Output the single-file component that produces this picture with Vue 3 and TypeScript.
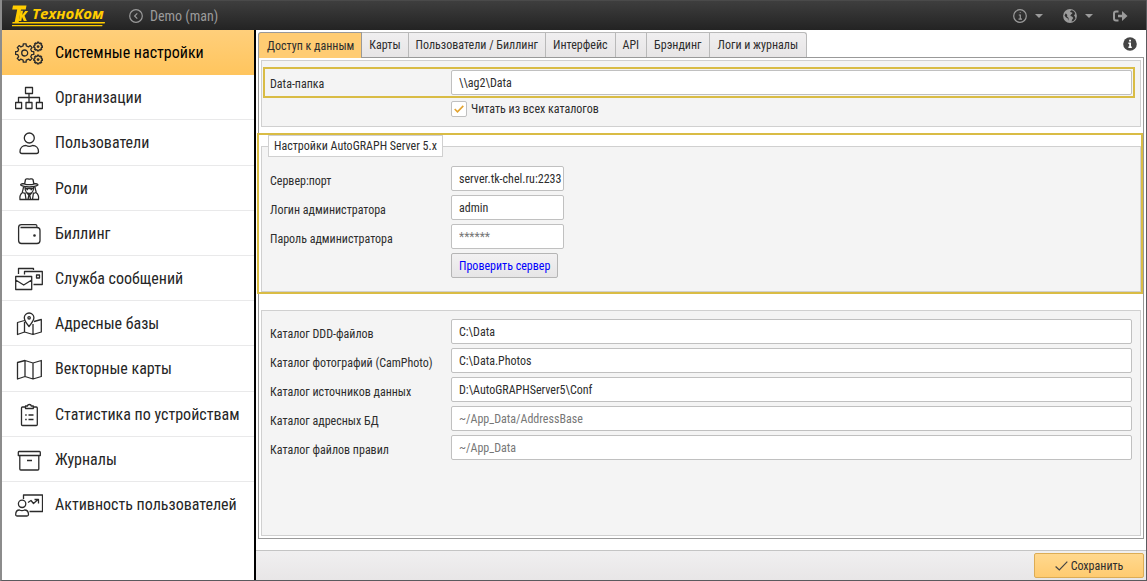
<script setup lang="ts">
import { ref } from 'vue'

interface MenuItem {
  label: string
  icon: string
}

interface Field {
  id: string
  label: string
  value: string
  placeholder?: string
  type?: string
}

function gear(cx: number, cy: number, outer: number, inner: number, teeth: number): string {
  const step = (Math.PI * 2) / teeth
  const points: string[] = []
  for (let i = 0; i < teeth; i++) {
    const a = i * step
    const corners: [number, number][] = [
      [inner, a - step * 0.28],
      [outer, a - step * 0.2],
      [outer, a + step * 0.2],
      [inner, a + step * 0.28],
    ]
    for (const [r, t] of corners) {
      points.push(`${(cx + r * Math.cos(t)).toFixed(2)} ${(cy + r * Math.sin(t)).toFixed(2)}`)
    }
  }
  return `M${points.join('L')}Z`
}

const gears = [
  gear(9.7, 12, 9.2, 7.2, 8),
  'M12.7 12a3 3 0 1 1-6 0a3 3 0 1 1 6 0Z',
  gear(23.1, 5.6, 4.4, 3.5, 8),
  'M23.9 5.6a.8.8 0 1 1-1.600 0a.8.8 0 1 1 1.600 0Z',
  gear(23.1, 18.6, 4.4, 3.5, 8),
  'M23.9 18.6a.8.8 0 1 1-1.600 0a.8.8 0 1 1 1.600 0Z',
].join('')

const menu: MenuItem[] = [
  { label: 'Системные настройки', icon: gears },
  {
    label: 'Организации',
    icon: 'M10.5 1.5h7v6h-7ZM14 7.5v9M3.5 16.5v-5h21v5M.6 16.5h6v6h-6ZM11 16.5h6v6h-6ZM21.4 16.5h6v6h-6Z',
  },
  {
    label: 'Пользователи',
    icon: 'M19.3 7a5 5 0 1 1-10 0a5 5 0 1 1 10 0ZM5 20.5c0-3.5 2.5-6 6-6c2 1 4.500 1 6.500 0c3.500 0 6 2.500 6 6c0 1.400-.6 2-2 2h-14.500c-1.400 0-2-.6-2-2Z',
  },
  {
    label: 'Роли',
    icon: 'M9.5 7.500L10.500 2.500C11.500 1 13 2.200 14.300 2.200C15.600 2.200 17 1 18 2.500L19 7.500M9.500 6.500C6.500 6.800 5 7.300 6 8.300C9 10.300 19.600 10.300 22.600 8.300C23.600 7.300 22 6.800 19 6.500M9 6.800C12.500 8 16 8 19.600 6.800M8.500 10C8 14 7 14.500 7.500 15.500L10 16.500M20 10C20.500 14 21.500 14.500 21 15.500L18.500 16.500M10 10.200C10 14 12 16.500 14.300 16.500C16.600 16.500 18.600 14 18.600 10.200M10.500 11.500h7.600M11.500 12.500h1.500M15.500 12.500h1.500M7.500 15.500C5 17.500 4.500 20 5 22.500H11L10 15.500M21 15.500C23.500 17.500 24 20 23.500 22.500H17.500L18.500 15.500M11 22.500H17.500M11.500 15.500L14.300 18.500L17 15.500M13 22.500L13.800 18.500M15.600 22.500L14.800 18.500',
  },
  {
    label: 'Биллинг',
    icon: 'M5.500 5.500H22C24 5.500 25 6.500 25 8.500V18.500C25 20.500 24 21.500 22 21.500H6.500C4.500 21.500 3.600 20.500 3.600 18.500V5.500C3.600 3.500 4.500 2.700 6.500 2.700H20.500C22 2.700 22 3.500 22 5.500M18.800 13.500a.7.7 0 1 1 1.400 0a.7.7 0 1 1-1.400 0Z',
  },
  {
    label: 'Служба сообщений',
    icon: 'M.7 9.500h16v13h-16ZM.7 13L8.700 18L16.700 13M3.500 7V1.500H18.500V3M9.500 7.500V4.500H27.300V17.500H18.500M21.500 8h3v3h-3Z',
  },
  {
    label: 'Адресные базы',
    icon: 'M9.500 8.500L2.500 10.500V22.500L9.500 20L18 22.500L26.300 20V7.500L19 9.500M9.500 10V20M18 12V22.500M14 14.500C11.500 11.500 9.300 8.500 9.300 5.800A4.800 4.800 0 0 1 18.900 5.800C18.900 8.500 16.500 11.500 14 14.500ZM15.300 5.800a1.200 1.200 0 1 1-2.400 0a1.200 1.200 0 1 1 2.400 0Z',
  },
  {
    label: 'Векторные карты',
    icon: 'M2.500 5.500L10 3.500L18 6L26.300 3.500V19.500L18 22L10 19.500L2.500 22ZM10 3.500V19.500M18 6V22',
  },
  {
    label: 'Статистика по устройствам',
    icon: 'M10 4H7.500Q6.500 4 6.500 5V21.500Q6.500 22.500 7.500 22.500H21.300Q22.300 22.500 22.300 21.500V5Q22.300 4 21.300 4H18.700M10.500 3H12.500C12.500 1 16.200 1 16.200 3H18.300V5.500H10.500ZM10.200 12h1.500M13.500 12h5M10.200 16.500h1.500M13.500 16.500h5',
  },
  {
    label: 'Журналы',
    icon: 'M4 3.500H24.500Q25.300 3.500 25.300 4.500V7.500H3.300V4.500Q3.300 3.500 4 3.500ZM4.800 7.500V21Q4.800 22 5.800 22H22.800Q23.800 22 23.800 21V7.500M12 12.500h5',
  },
  {
    label: 'Активность пользователей',
    icon: 'M8.500 6V2H27.500V18.500H14.500M10.800 10.800a3.700 3.700 0 1 1-7.400 0a3.700 3.700 0 1 1 7.400 0ZM.7 21.500C.7 18 2.500 17 4.500 17C6 17.800 8 17.800 9.500 17C11.500 17 13.500 18 13.500 21.500C13.500 22.500 13 23 12 23H2.200C1.200 23 .7 22.500 .7 21.500ZM13 9.500L16 7.500L18.500 10.500L23 6.500M19.500 6.500H23.500V10.500',
  },
]

const tabs = ['Доступ к данным', 'Карты', 'Пользователи / Биллинг', 'Интерфейс', 'API', 'Брэндинг', 'Логи и журналы']
const activeItem = ref(0)
const activeTab = ref(0)

const dataFolder = ref('\\\\ag2\\Data')
const readAll = ref(true)

const serverFields = ref<Field[]>([
  { id: 'server', label: 'Сервер:порт', value: 'server.tk-chel.ru:2233' },
  { id: 'login', label: 'Логин администратора', value: 'admin' },
  { id: 'password', label: 'Пароль администратора', value: '', placeholder: '******', type: 'password' },
])

const catalogFields = ref<Field[]>([
  { id: 'ddd', label: 'Каталог DDD-файлов', value: 'C:\\Data' },
  { id: 'photos', label: 'Каталог фотографий (CamPhoto)', value: 'C:\\Data.Photos' },
  { id: 'sources', label: 'Каталог источников данных', value: 'D:\\AutoGRAPHServer5\\Conf' },
  { id: 'address', label: 'Каталог адресных БД', value: '', placeholder: '~/App_Data/AddressBase' },
  { id: 'rules', label: 'Каталог файлов правил', value: '', placeholder: '~/App_Data' },
])
</script>

<template>
  <div class="app">
    <header class="topbar">
      <div class="logo">
        <svg width="96" height="22" viewBox="0 0 96 22" aria-hidden="true">
          <path d="M1 .5H14.500L13.700 4.500H9L6.500 18H2.500L5.200 4.500H.2Z" />
          <path d="M8.500 5.800H11L10.300 10L13.200 6H16.300L12.500 10.800L14.800 16H11.800L10 12L9.300 16H6.800Z" />
          <path d="M.5 17H93L92.700 18.500H.3ZM0 20H90.500L90.200 21.200H0Z" />
        </svg>
        <span>ТехноКом</span>
      </div>
      <button class="back" type="button">
        <svg width="14" height="14" viewBox="0 0 14 14"><circle cx="7" cy="7" r="6.300" /><path d="M8.300 4.300L5.600 7L8.300 9.700" /></svg>
        <span>Demo (man)</span>
      </button>
      <div class="tools">
        <button type="button" aria-label="Информация">
          <svg width="14" height="14" viewBox="0 0 14 14"><circle cx="7" cy="7" r="6.300" /><path d="M5.800 6H7.300V10M5.500 10.200H9M6.800 3.500H7.600" /></svg>
          <i class="caret"></i>
        </button>
        <button type="button" aria-label="Язык">
          <svg width="14" height="14" viewBox="0 0 14 14"><circle cx="7" cy="7" r="6.900" class="solid" /><path class="land" d="M8.500 1.200L7 2.200L7.800 3.300L9.300 3.400L9.300 4.500L8 5.500L7.300 7L9 7.500L10.300 9L9.200 10.500L8.500 12.600L10.500 12L12.500 9.500L12 7.800L11 6.300L12.300 5L11.500 3L10 1.700ZM2.800 4.200L1.500 6.500L3 8.500L4.600 9.300L5.300 11.800L5.600 9L4 7.500L4.300 6Z" /></svg>
          <i class="caret"></i>
        </button>
        <button type="button" aria-label="Выход">
          <svg width="15" height="12" viewBox="0 0 15 12"><path class="thick" d="M5.500 1.500H3Q1 1.500 1 3.500V8.500Q1 10.500 3 10.500H5.500" /><path class="solid" d="M5 4.700H9V1L14.500 6L9 11V7.300H5Z" /></svg>
        </button>
      </div>
    </header>

    <div class="body">
      <nav class="sidebar">
        <a
          v-for="(item, i) in menu"
          :key="item.label"
          href="#"
          class="item"
          :class="{ active: i === activeItem }"
          @click.prevent="activeItem = i"
        >
          <svg width="28" height="24" viewBox="0 0 28 24"><path :d="item.icon" /></svg>
          <span>{{ item.label }}</span>
        </a>
      </nav>

      <main class="content">
        <div class="tabbar">
          <div class="tabs" role="tablist">
            <button
              v-for="(tab, i) in tabs"
              :key="tab"
              type="button"
              role="tab"
              :aria-selected="i === activeTab"
              :class="{ selected: i === activeTab }"
              @click="activeTab = i"
            >{{ tab }}</button>
          </div>
          <button class="help" type="button" aria-label="Справка">
            <svg width="14" height="14" viewBox="0 0 14 14"><circle cx="7" cy="7" r="6.800" /><path d="M5.400 5.600H8V9.500H8.800V10.900H5.400V9.500H6.200V7H5.400ZM6.100 2.700H8V4.500H6.100Z" /></svg>
          </button>
        </div>

        <section class="panel">
          <div class="group first">
            <div class="row marked">
              <label for="data-folder">Data-папка</label>
              <input id="data-folder" v-model="dataFolder" type="text" />
            </div>
            <label class="check">
              <input v-model="readAll" type="checkbox" />
              <svg width="10" height="8" viewBox="0 0 10 8"><path d="M.7 4L3.500 6.800L9.300 .9" /></svg>
              <span>Читать из всех каталогов</span>
            </label>
          </div>

          <div class="frame">
            <fieldset class="group server">
              <legend>Настройки AutoGRAPH Server 5.x</legend>
              <div v-for="f in serverFields" :key="f.id" class="row">
                <label :for="f.id">{{ f.label }}</label>
                <input :id="f.id" v-model="f.value" :type="f.type ?? 'text'" :placeholder="f.placeholder" class="short" />
              </div>
              <button type="button" class="verify">Проверить сервер</button>
            </fieldset>
          </div>

          <div class="group catalogs">
            <div v-for="f in catalogFields" :key="f.id" class="row">
              <label :for="f.id">{{ f.label }}</label>
              <input :id="f.id" v-model="f.value" type="text" :placeholder="f.placeholder" />
            </div>
          </div>
        </section>

        <footer class="footer">
          <button type="button" class="save">
            <svg width="13" height="10" viewBox="0 0 13 10"><path d="M.6 5.500L4.300 9L12.300 .7" /></svg>
            <span>Сохранить</span>
          </button>
        </footer>
      </main>
    </div>
  </div>
</template>

<style>
body {
  margin: 0;
}
</style>

<style scoped>
.app,
.app * {
  box-sizing: border-box;
}
.app {
  display: flex;
  flex-direction: column;
  min-height: 100vh;
  border: solid #5a5a5e;
  border-width: 0 1px 1px 0;
  border-left: 2px solid #8c8c8c;
  background: #fff;
  color: #2d2d2d;
  font: 12px/16px 'Roboto Condensed', 'Liberation Sans', sans-serif;
}
button,
input {
  margin: 0;
  font: inherit;
  color: inherit;
}
svg {
  display: block;
  flex: none;
}

.topbar {
  display: flex;
  align-items: center;
  height: 30px;
  padding: 0 18px 0 10px;
  border-top: 1px solid #4a4a4a;
  background: linear-gradient(#3e3e3e, #232323);
  color: #9b9b9b;
}
.topbar button {
  display: flex;
  align-items: center;
  padding: 0;
  border: 0;
  background: none;
}
.topbar button svg {
  fill: none;
  stroke: #9b9b9b;
  stroke-width: 1.2;
}
.topbar button .solid {
  fill: #9b9b9b;
  stroke: none;
}
.topbar button .land {
  fill: #303030;
  stroke: none;
}
.topbar button .thick {
  stroke-width: 2;
}
.logo {
  display: grid;
  width: 97px;
  margin-right: 20px;
  color: #fc0;
  fill: #fc0;
  font: italic 700 15px/16px 'Open Sans', sans-serif;
}
.logo > * {
  grid-area: 1 / 1;
}
.logo span {
  padding-left: 20px;
}
.back {
  gap: 7px;
}
.topbar .back {
  font-size: 14px;
}
.tools {
  display: flex;
  gap: 20px;
  margin-left: auto;
}
.tools button {
  gap: 8px;
}
.caret {
  border: 4px solid transparent;
  border-top-color: #9b9b9b;
  border-bottom: 0;
}

.body {
  display: flex;
  flex: 1;
}
.sidebar {
  display: flex;
  flex: none;
  flex-direction: column;
  width: 254px;
  padding-bottom: 53px;
  border-right: 2px solid #000;
}
.item {
  display: flex;
  flex: 1;
  align-items: center;
  gap: 12px;
  min-height: 45px;
  padding: 2px 0 0 13px;
  border-bottom: 1px solid #e9e9ea;
  color: #262626;
  font-size: 16px;
  line-height: 20px;
  text-decoration: none;
  white-space: nowrap;
}
.item:last-child {
  border-bottom-color: transparent;
}
.item svg {
  fill: none;
  stroke: #2b2b2b;
  stroke-width: 1.3;
  stroke-linejoin: round;
}
.item.active {
  border-bottom-color: #ffc55e;
  background: linear-gradient(#ffcf7b, #ffc55e);
  color: #000;
}

.content {
  display: flex;
  flex: 1;
  flex-direction: column;
  min-width: 0;
}
.tabbar {
  position: relative;
  display: flex;
  justify-content: space-between;
  align-items: flex-end;
  padding: 2px 9px 0 2px;
}
.tabs {
  display: flex;
  height: 26px;
  margin-bottom: -1px;
}
.tabs button {
  height: 25px;
  padding: 0 7px;
  border: 1px solid #b9b9b9;
  border-width: 1px 1px 0 0;
  background: linear-gradient(#f0eff0, #e7e5e6);
  white-space: nowrap;
}
.tabs button:first-child {
  padding-left: 8px;
  border-left-width: 1px;
  border-top-left-radius: 3px;
}
.tabs button:last-child {
  padding: 0 8px;
  border-top-right-radius: 3px;
}
.tabs .selected {
  height: 26px;
  border-color: #999;
  background: #ffcc73;
}
.help {
  padding: 0;
  margin-bottom: 6px;
  border: 0;
  background: none;
}
.help circle {
  fill: #454545;
}
.help path {
  fill: #fff;
}
.panel {
  display: flex;
  flex: 1;
  flex-direction: column;
  margin: 0 2px 11px;
  padding: 2px 0;
  border: 1px solid #999;
}

.group {
  border: 1px solid #d0d0d0;
  background: #f4f4f4;
}
.row {
  display: grid;
  grid-template-columns: 181px 1fr;
  align-items: start;
}
.row label {
  padding-top: 2px;
  line-height: 27px;
}
.row input {
  width: 100%;
  height: 25px;
  padding: 0 7px;
  border: 1px solid #c0c0c0;
  border-radius: 2px;
  background: #fff;
  outline: 0;
}
.row .short {
  width: 113px;
  padding-right: 0;
}
input::placeholder {
  color: #777;
  opacity: 1;
}
.first {
  height: 67px;
  margin: 0 2px;
  padding: 6px 5px 0 1px;
}
.marked {
  padding: 1px 1px 1px 5px;
  border: 2px solid #d9bc45;
}
.marked label {
  padding-top: 3px;
  line-height: 22px;
}
.check {
  display: grid;
  grid-template-columns: 16px auto;
  justify-content: start;
  align-items: center;
  column-gap: 4px;
  margin: 3px 0 0 188px;
}
.check input {
  grid-area: 1 / 1;
  width: 16px;
  height: 16px;
  appearance: none;
  border: 1px solid #c0c0c0;
  border-radius: 2px;
  background: #fff;
}
.check svg {
  grid-area: 1 / 1;
  justify-self: center;
  fill: none;
  stroke: #e2a32f;
  stroke-width: 1.6;
  visibility: hidden;
}
.check input:checked + svg {
  visibility: visible;
}
.frame {
  margin: 6px 0 0 -2px;
  padding-left: 2px;
  border: 2px solid #d9bc45;
}
.server {
  min-width: 0;
  margin: 0;
  padding: 9px 8px 13px;
}
legend {
  margin-left: -2px;
  padding: 2px 5px;
  border: 1px solid #d0d0d0;
  background: #fff;
  line-height: 16px;
}
.verify {
  display: block;
  height: 25px;
  margin-left: 181px;
  padding: 0 7px;
  border: 1px solid #b5b5b5;
  border-radius: 2px;
  background: linear-gradient(#f2f1f2, #e6e5e6);
}
button.verify {
  color: #00f;
}
.catalogs {
  flex: 1;
  margin: 16px 2px 0;
  padding: 8px;
}

.footer {
  display: flex;
  justify-content: flex-end;
  height: 30px;
  padding: 2px;
  border-top: 1px solid #c4c4c4;
  background: linear-gradient(#f0eff0, #e8e6e7);
}
.save {
  display: flex;
  justify-content: center;
  align-items: center;
  gap: 3px;
  width: 110px;
  height: 25px;
  border: 1px solid #dcac55;
  border-radius: 2px;
  background: linear-gradient(#ffd88f, #ffcb70);
}
.save svg {
  fill: none;
  stroke: #444;
  stroke-width: 1.2;
}
</style>
